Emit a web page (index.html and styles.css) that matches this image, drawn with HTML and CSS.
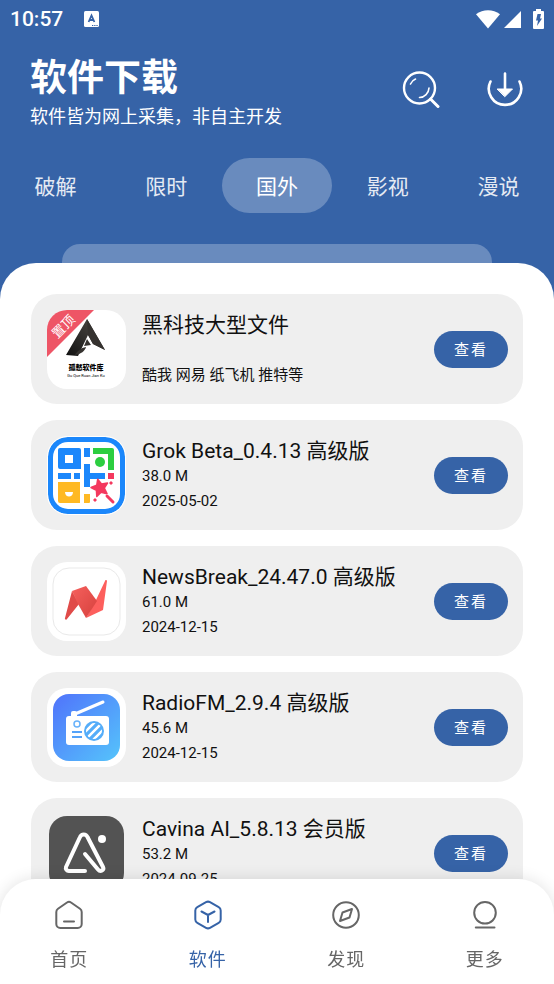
FILE: index.html
```html
<!DOCTYPE html>
<html lang="zh-CN">
<head>
  <meta charset="UTF-8" />
  <meta name="viewport" content="width=device-width, initial-scale=1.0" />
  <title>软件下载</title>
  <link rel="stylesheet" href="styles.css">
</head>
<body>
  <header class="header">
    <div class="status">
      <span class="time">10:57</span>
      <svg class="status-app" width="15" height="16" viewBox="0 0 15 16">
        <rect width="15" height="16" rx="1.5" fill="#fff"/>
        <path d="M4.600 11L7.500 4.500l2.900 6.500M5.500 9h4" fill="none" stroke="#3663a7" stroke-width="1.800"/>
        <path d="M8 14.500h6" stroke="#3663a7" stroke-width="1" stroke-dasharray="1.300 .900"/>
      </svg>
      <div class="status-icons">
        <svg width="24" height="19" viewBox="0 0 24 19"><path d="M0 4.200C7-1 17-1 24 4.200L12 18.500z" fill="#fff"/></svg>
        <svg width="17" height="17" viewBox="0 0 17 17"><path d="M17 0v17H0z" fill="#fff"/></svg>
        <svg class="battery" width="11" height="20" viewBox="0 0 11 20">
          <path d="M3 0h5v2h2a1 1 0 0 1 1 1v16a1 1 0 0 1-1 1H1a1 1 0 0 1-1-1V3a1 1 0 0 1 1-1h2z" fill="#fff"/>
          <path d="M4.500 5h3.500L7 9.500h2L4 17l1-5.500H3z" fill="#3663a7"/>
        </svg>
      </div>
    </div>

    <div class="top">
      <div class="heading">
        <h1>软件下载</h1>
        <p>软件皆为网上采集，非自主开发</p>
      </div>
      <div class="actions">
        <button aria-label="搜索">
          <svg width="38" height="38" viewBox="0 0 38 38" fill="none" stroke="#fff" stroke-linecap="round">
            <circle cx="17.500" cy="17" r="15.500" stroke-width="2.400"/>
            <path d="M28.500 28l7.500 7.500" stroke-width="3"/>
            <path d="M8.500 13a10 10 0 0 1 5-5M27 17a10 10 0 0 1-9.500 9.500" stroke-width="1.600"/>
          </svg>
        </button>
        <button aria-label="下载">
          <svg width="38" height="38" viewBox="0 0 38 38" fill="none" stroke="#fff" stroke-linecap="round">
            <path d="M4.500 10.500a16.200 16.200 0 1 0 29 0M19 2.500V19" stroke-width="2.600"/>
            <path d="M11.500 18h15L19 25.500z" fill="#fff" stroke-width="1"/>
          </svg>
        </button>
      </div>
    </div>

    <nav class="tabs">
      <button>破解</button>
      <button>限时</button>
      <button class="active">国外</button>
      <button>影视</button>
      <button>漫说</button>
    </nav>
    <div class="strip"></div>
  </header>

  <main class="sheet">
    <ul class="list">
      <li class="card">
        <svg class="app-icon" viewBox="0 0 79 79">
          <defs>
            <clipPath id="pinned"><rect width="79" height="79" rx="20"/></clipPath>
            <linearGradient id="dark" x1="0" y1="1" x2="1" y2="0"><stop stop-color="#111"/><stop offset="1" stop-color="#54504b"/></linearGradient>
          </defs>
          <g clip-path="url(#pinned)">
            <rect width="79" height="79" fill="#fff"/>
            <path d="M0 0h47L0 47z" fill="#ee5566"/>
            <path d="M40 9l18 31-12-6-5-9-10 21-12-1z" fill="url(#dark)"/>
            <path d="M40 9l18 31-12-6-5-9z" fill="#35322f"/>
            <path d="M28 45c2-4 6-7 11-8-1 4-5 7-11 8z" fill="#35322f"/>
            <path d="M40 29l4 6-7 1z" fill="#35322f"/>
            <text class="tag-text" x="17" y="21" transform="rotate(-45 17 17)">置顶</text>
            <text class="logo-text" x="39" y="60">孤慭软件库</text>
            <text class="logo-sub" x="39" y="67">Gu Que Ruan Jian Ku</text>
          </g>
        </svg>
        <div class="info">
          <h2>黑科技大型文件</h2>
          <p>酷我 网易 纸飞机 推特等</p>
        </div>
        <button class="view">查看</button>
      </li>

      <li class="card">
        <svg class="app-icon" viewBox="0 0 79 79">
          <rect x="1" y="1" width="77" height="77" rx="20" fill="#1b87fb"/>
          <rect x=".5" y=".5" width="78" height="78" rx="20" fill="none" stroke="#fff" stroke-width="1"/>
          <rect x="6" y="6" width="67" height="67" rx="15" fill="#fff"/>
          <path d="M13 12h19a2 2 0 0 1 2 2v19H13a2 2 0 0 1-2-2V14a2 2 0 0 1 2-2zM18 19v8h8v-8z" fill="#1b87fb" fill-rule="evenodd"/>
          <path d="M37 12h6v9h-6zM37 28h6v9h15v6H43v8h-6zM11 37h13v6H11zM27 37h6v6h-6z" fill="#1b87fb"/>
          <path d="M46 12h19a2 2 0 0 1 2 2v20h-6V18H46z" fill="#2cce40"/>
          <circle cx="53" cy="26" r="5" fill="#2cce40"/>
          <path d="M11 46h22v21H13a2 2 0 0 1-2-2zM37 58h6v8a1 1 0 0 1-1 1h-5z" fill="#ffb923"/>
          <path d="M18 56h8c0 6-8 6-8 0z" fill="#fff"/>
          <path d="M61 37h6v6h-6z" fill="#f4385e"/>
          <path d="M50.700 43.300l3.800 4.700 6-.9-3.200 5.100 2.700 5.500-5.900-1.500-4.300 4.200-.4-6.100-5.400-2.800 5.700-2.200z" fill="#f4385e" stroke="#f4385e" stroke-width="1.500" stroke-linejoin="round"/>
          <path d="M60 60l6 6" stroke="#f4385e" stroke-width="3" stroke-linecap="round"/>
          <path d="M64 45l2 2-2 2-2-2zM48 62l2 2-2 2-2-2z" fill="#f4385e"/>
        </svg>
        <div class="info">
          <h2>Grok Beta_0.4.13 高级版</h2>
          <p>38.0 M</p>
          <p>2025-05-02</p>
        </div>
        <button class="view">查看</button>
      </li>

      <li class="card">
        <svg class="app-icon" viewBox="0 0 79 79">
          <defs>
            <linearGradient id="red" x1="0" y1="0" x2="1" y2="1"><stop stop-color="#f6605d"/><stop offset="1" stop-color="#d6413d"/></linearGradient>
          </defs>
          <rect width="79" height="79" rx="20" fill="#fff"/>
          <rect x="6" y="6" width="67" height="67" rx="16" fill="none" stroke="#e9e9e9"/>
          <path d="M25 29l7 13-12 15a1 1 0 0 1-2-1z" fill="#e04b49"/>
          <path d="M60 19l-4 29-17 8 10-18 9-19a1 1 0 0 1 2 0z" fill="#fd5f5d"/>
          <path d="M25 29l14-5 11 15-11 17-8-14z" fill="url(#red)"/>
        </svg>
        <div class="info">
          <h2>NewsBreak_24.47.0 高级版</h2>
          <p>61.0 M</p>
          <p>2024-12-15</p>
        </div>
        <button class="view">查看</button>
      </li>

      <li class="card">
        <svg class="app-icon" viewBox="0 0 79 79">
          <defs>
            <linearGradient id="sky" x1="0" y1="0" x2="1" y2="1"><stop stop-color="#5073fb"/><stop offset="1" stop-color="#55c4fb"/></linearGradient>
            <clipPath id="speaker"><circle cx="47" cy="43" r="8"/></clipPath>
          </defs>
          <rect width="79" height="79" rx="20" fill="#fff"/>
          <rect x="6" y="6" width="67" height="67" rx="16" fill="url(#sky)"/>
          <path d="M28 26l28-12" stroke="#fff" stroke-width="3" stroke-linecap="round"/>
          <path d="M24 28v-3a2 2 0 0 1 2-2h2a2 2 0 0 1 2 2v3z" fill="#fff"/>
          <rect x="19" y="28" width="43" height="29" rx="3" fill="#fff"/>
          <circle cx="30" cy="36" r="3" fill="none" stroke="#68b2fb" stroke-width="1.500"/>
          <path d="M25 44h10M25 49h10" stroke="#55a3f9" stroke-width="2"/>
          <circle cx="47" cy="43" r="10" fill="#55adf9"/>
          <g clip-path="url(#speaker)">
            <path d="M35 47l16-16M39 51l16-16M43 55l16-16" stroke="#fff" stroke-width="2.500"/>
          </g>
        </svg>
        <div class="info">
          <h2>RadioFM_2.9.4 高级版</h2>
          <p>45.6 M</p>
          <p>2024-12-15</p>
        </div>
        <button class="view">查看</button>
      </li>

      <li class="card">
        <svg class="app-icon" viewBox="0 0 79 79">
          <rect x="2" y="2" width="75" height="75" rx="18" fill="#535353"/>
          <path d="M38 57H22a3 3 0 0 1-3-4l14-30c1.500-3.500 6-3.500 7.500 0L56 53c1.500 3-2.500 5.500-5 2.500L38 40" fill="none" stroke="#fff" stroke-width="4" stroke-linecap="round" stroke-linejoin="round"/>
          <circle cx="55" cy="25" r="4" fill="#fff"/>
        </svg>
        <div class="info">
          <h2>Cavina AI_5.8.13 会员版</h2>
          <p>53.2 M</p>
          <p>2024-09-25</p>
        </div>
        <button class="view">查看</button>
      </li>
    </ul>
  </main>

  <nav class="bottom-nav">
    <a href="#home">
      <svg width="30" height="30" viewBox="0 0 30 30">
        <path d="M13 2.500a3.500 3.500 0 0 1 4 0l9 6.200a4 4 0 0 1 1.700 3.300V24a4 4 0 0 1-4 4H6.300a4 4 0 0 1-4-4V12A4 4 0 0 1 4 8.700zM10 21.500h10"/>
      </svg>
      首页
    </a>
    <a href="#apps" class="active">
      <svg width="30" height="30" viewBox="0 0 30 30">
        <path d="M13 2.200a4 4 0 0 1 4 0l8.700 4.900a4 4 0 0 1 2 3.400v9a4 4 0 0 1-2 3.400L17 27.800a4 4 0 0 1-4 0l-8.700-4.900a4 4 0 0 1-2-3.400v-9a4 4 0 0 1 2-3.400zM8.500 11.500L15 15l6.500-3.500M15 15v7"/>
      </svg>
      软件
    </a>
    <a href="#discover">
      <svg width="30" height="30" viewBox="0 0 30 30">
        <circle cx="15" cy="15" r="12.800"/>
        <path d="M21 9l-2.500 8.500L9 21l2.500-8.500z"/>
      </svg>
      发现
    </a>
    <a href="#more">
      <svg width="30" height="30" viewBox="0 0 30 30">
        <circle cx="15" cy="12.800" r="10.800"/>
        <path d="M5.800 27.500h18.700"/>
      </svg>
      更多
    </a>
  </nav>
</body>
</html>
```
FILE: styles.css
```css
* {
  box-sizing: border-box;
}
body {
  margin: 0;
  font-family: Roboto, "Noto Sans CJK SC", sans-serif;
  background-color: #fff;
  color: #111;
  display: flex;
  flex-direction: column;
  height: 100vh;
}
h1, h2, p, ul {
  margin: 0;
  padding: 0;
}
button {
  font-family: inherit;
  border: none;
  padding: 0 0 2px;
  background: none;
  color: inherit;
  cursor: pointer;
}
svg {
  display: block;
}

.header {
  background-color: #3663a7;
  color: #fff;
  /* blue continues under the rounded corners of the sheet */
  padding-bottom: 36px;
  margin-bottom: -36px;
}
.status {
  display: flex;
  align-items: center;
  height: 38px;
  padding: 0 10px;
}
.time {
  font-size: 21px;
  font-weight: 500;
}
.status-app {
  margin-left: 21px;
}
.status-icons {
  display: flex;
  align-items: center;
  gap: 4px;
  margin-left: auto;
}
.battery {
  margin-left: 8px;
}
.top {
  display: flex;
  justify-content: space-between;
  align-items: center;
  height: 105px;
  padding: 0 30px;
}
.heading {
  padding-top: 8px;
}
.top h1 {
  font-size: 37px;
  line-height: 44px;
  font-weight: 700;
}
.top p {
  font-size: 18px;
  line-height: 32px;
}
.actions {
  display: flex;
  gap: 46px;
}
.tabs {
  display: grid;
  grid-template-columns: repeat(5, 1fr);
  margin-top: 15px;
}
.tabs button {
  height: 55px;
  border-radius: 28px;
  font-size: 21px;
  color: #e4eaf3;
}
.tabs .active {
  background-color: #698bbe;
  color: #fff;
}
.strip {
  height: 19px;
  margin: 31px 62px 0;
  border-radius: 18px 18px 0 0;
  background-color: #698bbe;
}

.sheet {
  flex: 1;
  min-height: 0;
  overflow-y: auto;
  scrollbar-width: none;
  background-color: #fff;
  border-radius: 36px 36px 0 0;
  padding: 31px 31px 0;
}
.list {
  list-style: none;
  display: flex;
  flex-direction: column;
  gap: 16px;
}
.card {
  display: flex;
  align-items: center;
  gap: 16px;
  height: 110px;
  padding: 0 15px 0 16px;
  border-radius: 26px;
  background-color: #efefef;
}
.app-icon {
  width: 79px;
  height: 79px;
  flex-shrink: 0;
}
.tag-text {
  font-size: 13px;
  fill: #fff;
  text-anchor: middle;
}
.logo-text {
  font-size: 7px;
  font-weight: 900;
  text-anchor: middle;
}
.logo-sub {
  font-size: 4px;
  text-anchor: middle;
}
.info {
  flex: 1;
  min-height: 77px;
  padding-top: 2px;
  display: flex;
  flex-direction: column;
  justify-content: space-between;
}
.info h2 {
  font-size: 21px;
  line-height: 25px;
  font-weight: 400;
}
.info p {
  font-size: 15px;
  line-height: 25px;
}
.card .view {
  width: 74px;
  height: 37px;
  border-radius: 19px;
  background-color: #3663a7;
  color: #fff;
  font-size: 15px;
  letter-spacing: 2px;
}

.bottom-nav {
  position: relative;
  display: grid;
  grid-template-columns: repeat(4, 1fr);
  height: 105px;
  padding-top: 21px;
  background-color: #fff;
  border-radius: 36px 36px 0 0;
  box-shadow: 0 0 16px rgba(0, 0, 0, 0.12);
}
.bottom-nav a {
  display: flex;
  flex-direction: column;
  align-items: center;
  gap: 15px;
  color: #666;
  font-size: 18px;
  letter-spacing: 1px;
  text-decoration: none;
}
.bottom-nav svg {
  fill: none;
  stroke: currentColor;
  stroke-width: 2;
  stroke-linecap: round;
  stroke-linejoin: round;
}
.bottom-nav .active {
  color: #3663a7;
}
```
